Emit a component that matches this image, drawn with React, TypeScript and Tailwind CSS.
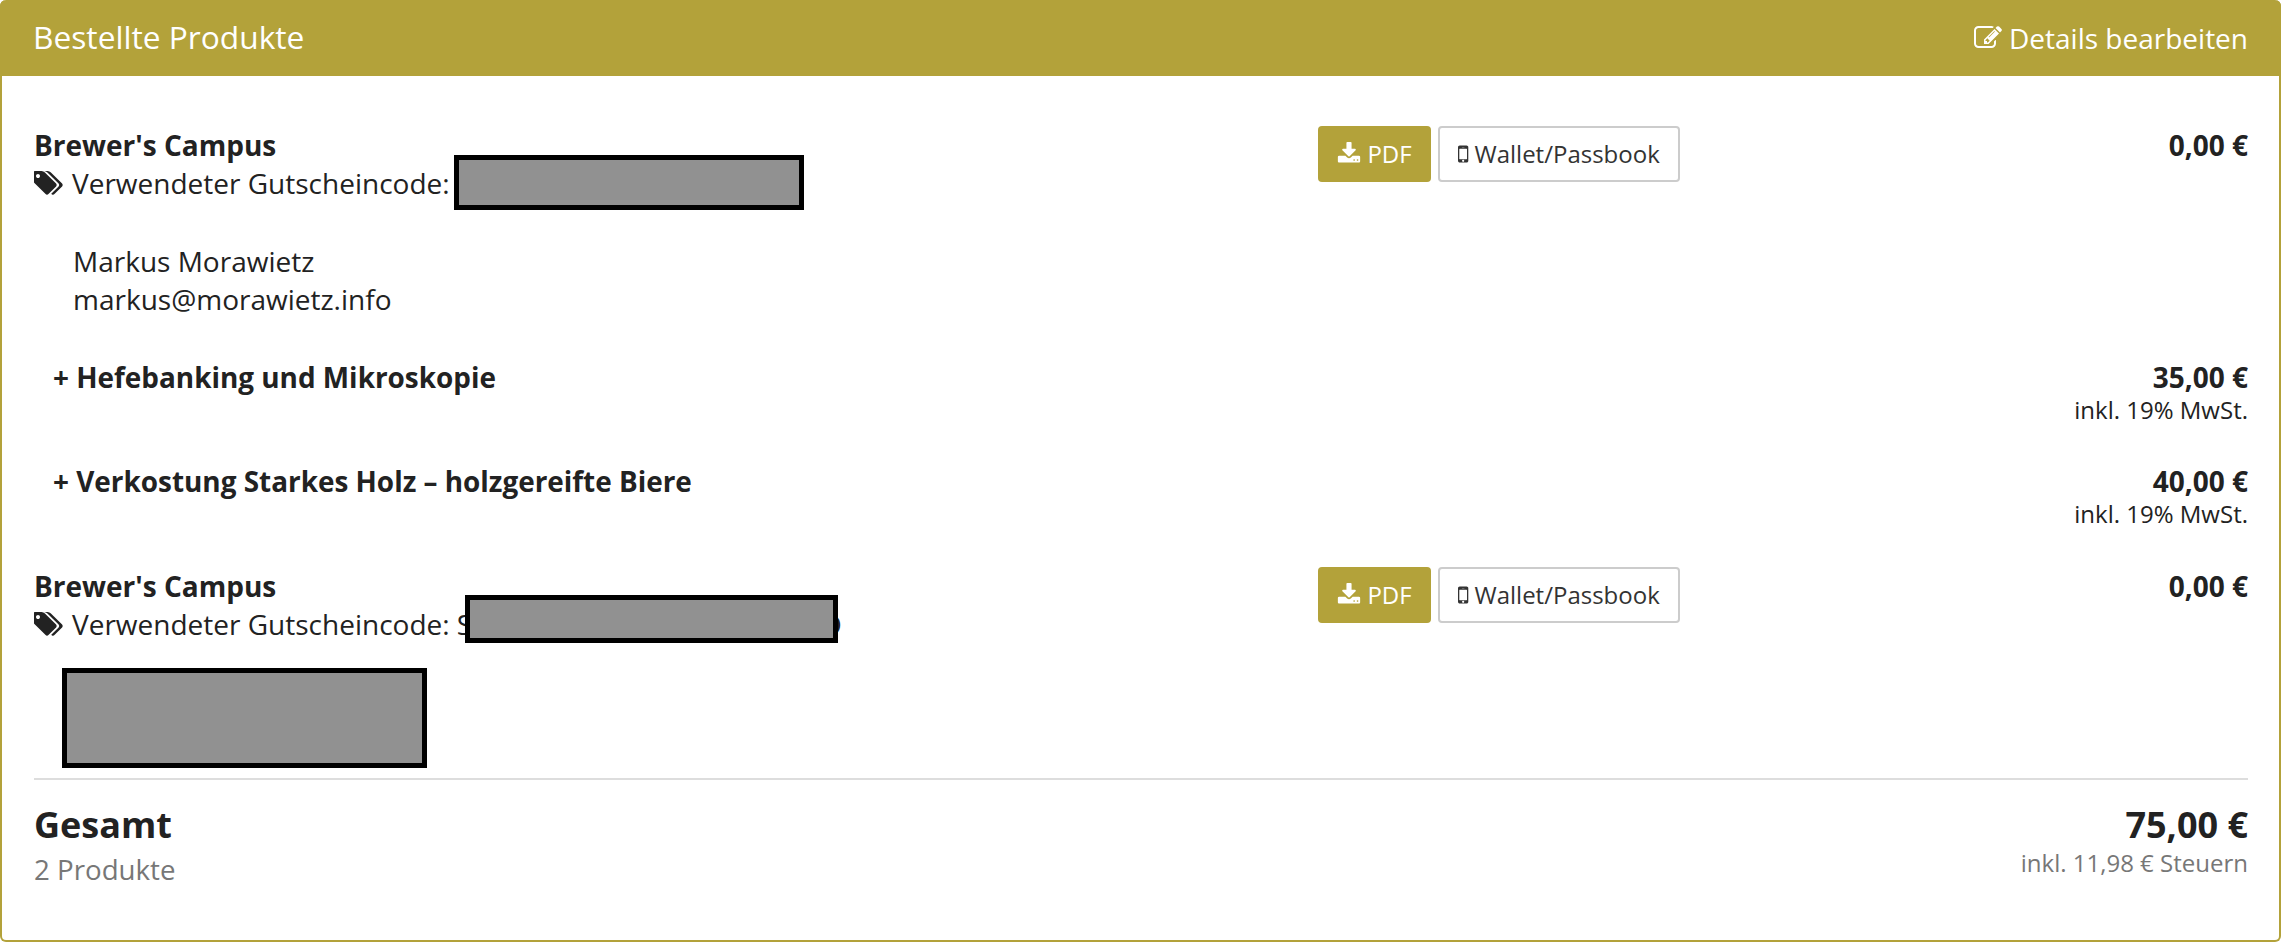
import React from 'react';

const TagsIcon = () => (
  <svg viewBox="0 0 1920 1792" className="mr-[8px] h-[28px] w-[30px] shrink-0 fill-current" aria-hidden="true">
    <path d="M384 448q0-53-37.500-90.500t-90.500-37.500-90.500 37.500-37.500 90.500 37.500 90.500 90.500 37.500 90.500-37.500 37.500-90.500zm1067 576q0 53-37 90l-491 492q-39 37-91 37-53 0-90-37l-715-716q-38-37-64.500-101t-26.500-117v-416q0-52 38-90t90-38h416q53 0 117 26.500t102 64.500l715 714q37 39 37 91zm384 0q0 53-37 90l-491 492q-39 37-91 37-36 0-59-14t-53-45l470-470q37-37 37-90 0-52-37-91l-715-714q-38-38-102-64.500t-117-26.500h224q53 0 117 26.500t102 64.500l715 714q37 39 37 91z" />
  </svg>
);

const DownloadIcon = () => (
  <svg viewBox="0 0 1792 1792" className="h-[24px] w-[24px] fill-current" aria-hidden="true">
    <path d="M1344 1344q0-26-19-45t-45-19-45 19-19 45 19 45 45 19 45-19 19-45zm256 0q0-26-19-45t-45-19-45 19-19 45 19 45 45 19 45-19 19-45zm128-224v320q0 40-28 68t-68 28h-1472q-40 0-68-28t-28-68v-320q0-40 28-68t68-28h465l135 136q58 56 136 56t136-56l136-136h464q40 0 68 28t28 68zm-325-569q17 41-14 70l-448 448q-18 19-45 19t-45-19l-448-448q-31-29-14-70 17-39 59-39h256v-448q0-26 19-45t45-19h256q26 0 45 19t19 45v448h256q42 0 59 39z" />
  </svg>
);

const MobileIcon = () => (
  <svg viewBox="512 0 768 1792" className="h-[24px] w-[10.300px] fill-current" aria-hidden="true">
    <path d="M976 1408q0-33-23.500-56.500t-56.500-23.500-56.500 23.500-23.500 56.500 23.500 56.500 56.500 23.500 56.500-23.500 23.500-56.500zm208-160v-704q0-13-9.500-22.500t-22.500-9.500h-512q-13 0-22.500 9.500t-9.500 22.500v704q0 13 9.500 22.500t22.500 9.500h512q13 0 22.500-9.500t9.500-22.500zm-192-848q0-16-16-16h-160q-16 0-16 16t16 16h160q16 0 16-16zm288-16v1024q0 52-38 90t-90 38h-512q-52 0-90-38t-38-90v-1024q0-52 38-90t90-38h512q52 0 90 38t38 90z" />
  </svg>
);

const EditIcon = () => (
  <svg viewBox="0 0 1792 1792" className="h-[28px] w-[28px] fill-current" aria-hidden="true">
    <path d="M888 1184l116-116-152-152-116 116v56h96v96h56zm440-720q-16-16-33 1l-350 350q-17 17-1 33t33-1l350-350q17-17 1-33zm80 594v190q0 119-84.500 203.500t-203.500 84.500h-832q-119 0-203.500-84.500t-84.500-203.500v-832q0-119 84.500-203.500t203.500-84.500h832q63 0 117 25 15 7 18 23 3 17-9 29l-49 49q-14 14-32 8-23-6-45-6h-832q-66 0-113 47t-47 113v832q0 66 47 113t113 47h832q66 0 113-47t47-113v-126q0-13 9-22l64-64q15-15 35-7t20 29zm-96-738l288 288-672 672h-288v-288zm444 132l-92 92-288-288 92-92q28-28 68-28t68 28l152 152q28 28 28 68t-28 68z" />
  </svg>
);

const Redaction: React.FC<{ className: string }> = ({ className }) => (
  <span className={`absolute border-[5px] border-black bg-[#919191] ${className}`} />
);

const Buttons = () => (
  <div className="flex items-start gap-[7px]">
    <a className="flex h-[56px] w-[113px] items-center justify-center gap-[6px] rounded-[4px] bg-[#b3a23a] text-[24px] text-white">
      <DownloadIcon />
      PDF
    </a>
    <a className="flex h-[56px] w-[242px] items-center justify-center gap-[6px] rounded-[4px] border-2 border-[#cccccc] bg-white text-[24px] text-[#333333]">
      <MobileIcon />
      Wallet/Passbook
    </a>
  </div>
);

const AddOn: React.FC<{ title: string; price: string; className: string }> = ({ title, price, className }) => (
  <div className={`flex justify-between ${className}`}>
    <div className="pl-[19px] text-[27.900px] font-bold">+ {title}</div>
    <div className="text-right">
      <div className="font-bold">{price}</div>
      <div className="-mt-[3px] text-[24px] leading-[33px]">inkl. 19% MwSt.</div>
    </div>
  </div>
);

export default function App() {
  return (
    <div className="h-[942px] w-[2288px] overflow-hidden bg-white pr-[7px] font-['Open_Sans',sans-serif] text-[28px] leading-[38px] text-[#222222]">
      <section className="flex h-full flex-col rounded-[6px] border-2 border-t-0 border-[#b3a23a]">
        <header className="-mx-[2px] flex h-[76px] items-center justify-between rounded-t-[6px] bg-[#b3a23a] pl-[33px] pr-[33px] text-white">
          <h2 className="-mt-[2px] text-[31.700px] leading-[42px]">Bestellte Produkte</h2>
          <a className="flex items-center gap-[7px] text-[28px]">
            <EditIcon />
            Details bearbeiten
          </a>
        </header>

        <div className="pl-[31px] pr-[31px] pt-[50px]">
          <div className="flex">
            <div className="ml-[1px] w-[1284px] shrink-0">
              <div className="font-bold">Brewer's Campus</div>
              <div className="relative flex items-center">
                <TagsIcon />
                <span>Verwendeter Gutscheincode:</span>
                <Redaction className="left-[420px] top-[-9px] h-[55px] w-[350px]" />
              </div>
            </div>
            <Buttons />
            <div className="flex-1 text-right font-bold">0,00 €</div>
          </div>

          <div className="ml-[1px] mt-[40px] pl-[39px]">
            <div>Markus Morawietz</div>
            <div>markus@morawietz.info</div>
          </div>

          <AddOn title="Hefebanking und Mikroskopie" price="35,00 €" className="ml-[1px] mt-[40px]" />
          <AddOn title="Verkostung Starkes Holz – holzgereifte Biere" price="40,00 €" className="ml-[1px] mt-[36px]" />

          <div className="mt-[37px] flex">
            <div className="ml-[1px] w-[1284px] shrink-0">
              <div className="font-bold">Brewer's Campus</div>
              <div className="relative flex items-center">
                <TagsIcon />
                <span className="whitespace-pre">Verwendeter Gutscheincode: S</span>
                <span className="absolute left-[786px] top-0">O</span>
                <Redaction className="left-[431px] top-[-10px] h-[48px] w-[373px]" />
              </div>
            </div>
            <Buttons />
            <div className="flex-1 text-right font-bold">0,00 €</div>
          </div>

          <div className="ml-[29px] mt-[25px] h-[100px] w-[365px] border-[5px] border-black bg-[#919191]" />

          <div className="ml-[1px] mt-[10px] h-[2px] bg-[#dddddd]" />

          <div className="ml-[1px] mt-[19px] flex justify-between">
            <div>
              <div className="text-[36px] font-bold leading-[51px]">Gesamt</div>
              <div className="text-[27.700px] text-[#777777]">2 Produkte</div>
            </div>
            <div className="pt-[1px] text-right">
              <div className="text-[36px] font-bold leading-[49px]">75,00 €</div>
              <div className="-mt-[3px] text-[24px] leading-[33px] text-[#777777]">inkl. 11,98 € Steuern</div>
            </div>
          </div>
        </div>
      </section>
    </div>
  );
}
